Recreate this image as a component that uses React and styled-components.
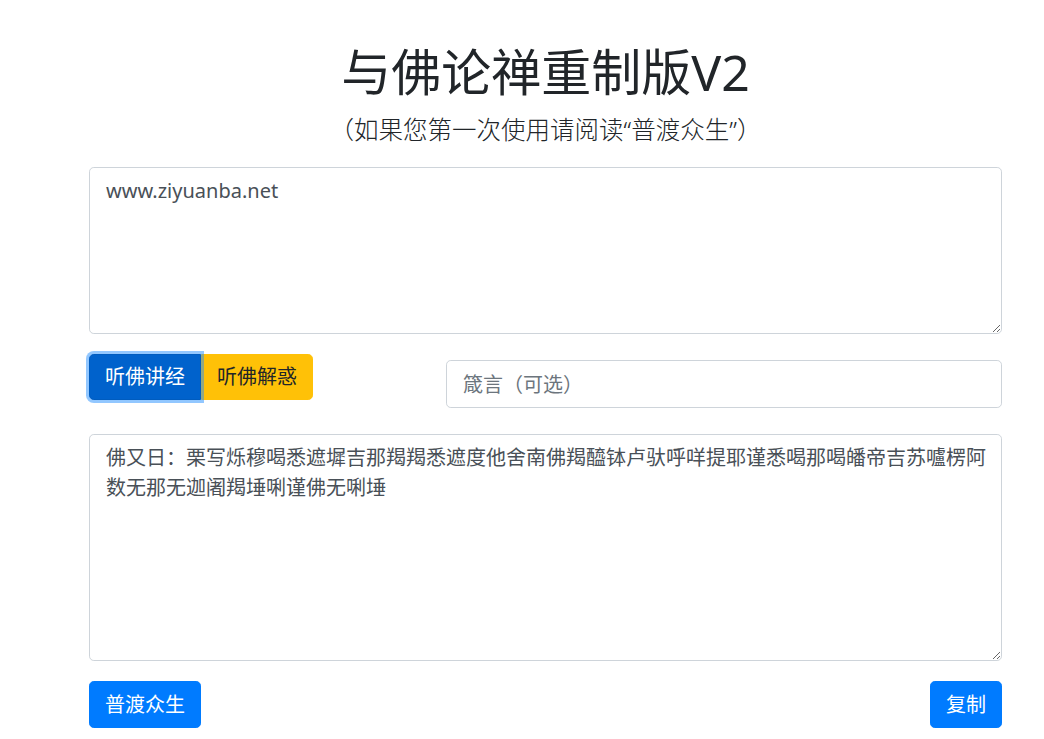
import React, { useState } from "react";
import styled, { createGlobalStyle } from "styled-components";

const GlobalStyle = createGlobalStyle`
  body {
    margin: 0;
    background: #fff;
    color: #212529;
    font-family: "Segoe UI", "Noto Sans", "Noto Sans CJK SC", sans-serif;
  }
  * { box-sizing: border-box; }
`;

const Page = styled.div`
  width: 913px;
  margin: 0 0 0 89px;
  padding-top: 42px;
  display: flex;
  flex-direction: column;
`;

const Title = styled.h1`
  margin: 0;
  text-align: center;
  font-size: 50px;
  line-height: 60px;
  font-weight: 400;
  color: #212529;
`;

const Subtitle = styled.h4`
  margin: 10px 0 19px;
  text-align: center;
  font-size: 24.5px;
  line-height: 36px;
  font-weight: 300;
  color: #212529;
`;

const Area = styled.textarea`
  display: block;
  width: 100%;
  height: ${({ $h }) => $h}px;
  padding: 8px 12px 8px 16px;
  font-family: inherit;
  font-size: 20px;
  line-height: 1.5;
  color: #495057;
  background: #fff;
  border: 1px solid #ced4da;
  border-radius: 4.8px;
  outline: none;
`;

const Controls = styled.div`
  display: flex;
  align-items: flex-start;
  justify-content: space-between;
  margin: 20px 0 26px;
`;

const Group = styled.div`
  display: flex;
`;

const Btn = styled.button`
  height: ${({ $h }) => $h || 47}px;
  padding: 0 15px;
  font-family: inherit;
  font-size: 20px;
  line-height: 1;
  border: 1px solid ${({ $bg }) => $bg};
  background: ${({ $bg }) => $bg};
  color: ${({ $fg }) => $fg || "#fff"};
  border-radius: 4.8px;
  cursor: pointer;
  position: relative;
`;

const GroupBtn = styled(Btn)`
  &:first-child {
    border-top-right-radius: 0;
    border-bottom-right-radius: 0;
  }
  &:last-child {
    border-top-left-radius: 0;
    border-bottom-left-radius: 0;
  }
  ${({ $active }) =>
    $active &&
    `
    z-index: 1;
    background: #0062cc;
    border-color: #005cbf;
    box-shadow: 0 0 0 3px rgba(38, 143, 255, 0.5);
  `}
`;

const KeyInput = styled.input`
  width: 556px;
  height: 48px;
  margin-top: 6px;
  padding: 8px 16px;
  font-family: inherit;
  font-size: 20px;
  color: #495057;
  border: 1px solid #ced4da;
  border-radius: 4.8px;
  outline: none;
  &::placeholder {
    color: #6c757d;
  }
`;

const Footer = styled.div`
  display: flex;
  justify-content: space-between;
  margin-top: 20px;
`;

const OUTPUT =
  "佛又日：栗写烁穆喝悉遮墀吉那羯羯悉遮度他舍南佛羯醯钵卢驮呼咩提耶谨悉喝那喝皤帝吉苏嚧楞阿数无那无迦阇羯埵唎谨佛无唎埵";

export default function App() {
  const [mode, setMode] = useState("encode");
  return (
    <>
      <GlobalStyle />
      <Page>
        <Title>与佛论禅重制版V2</Title>
        <Subtitle>（如果您第一次使用请阅读“普渡众生”）</Subtitle>
        <Area $h={167} defaultValue="www.ziyuanba.net" />
        <Controls>
          <Group>
            <GroupBtn
              $h={46}
              $bg="#0069d9"
              $active={mode === "encode"}
              onClick={() => setMode("encode")}
            >
              听佛讲经
            </GroupBtn>
            <GroupBtn
              $h={46}
              $bg="#ffc107"
              $fg="#212529"
              $active={mode === "decode"}
              onClick={() => setMode("decode")}
            >
              听佛解惑
            </GroupBtn>
          </Group>
          <KeyInput placeholder="箴言（可选）" />
        </Controls>
        <Area $h={227} defaultValue={OUTPUT} />
        <Footer>
          <Btn $bg="#007bff">普渡众生</Btn>
          <Btn $bg="#007bff">复制</Btn>
        </Footer>
      </Page>
    </>
  );
}
